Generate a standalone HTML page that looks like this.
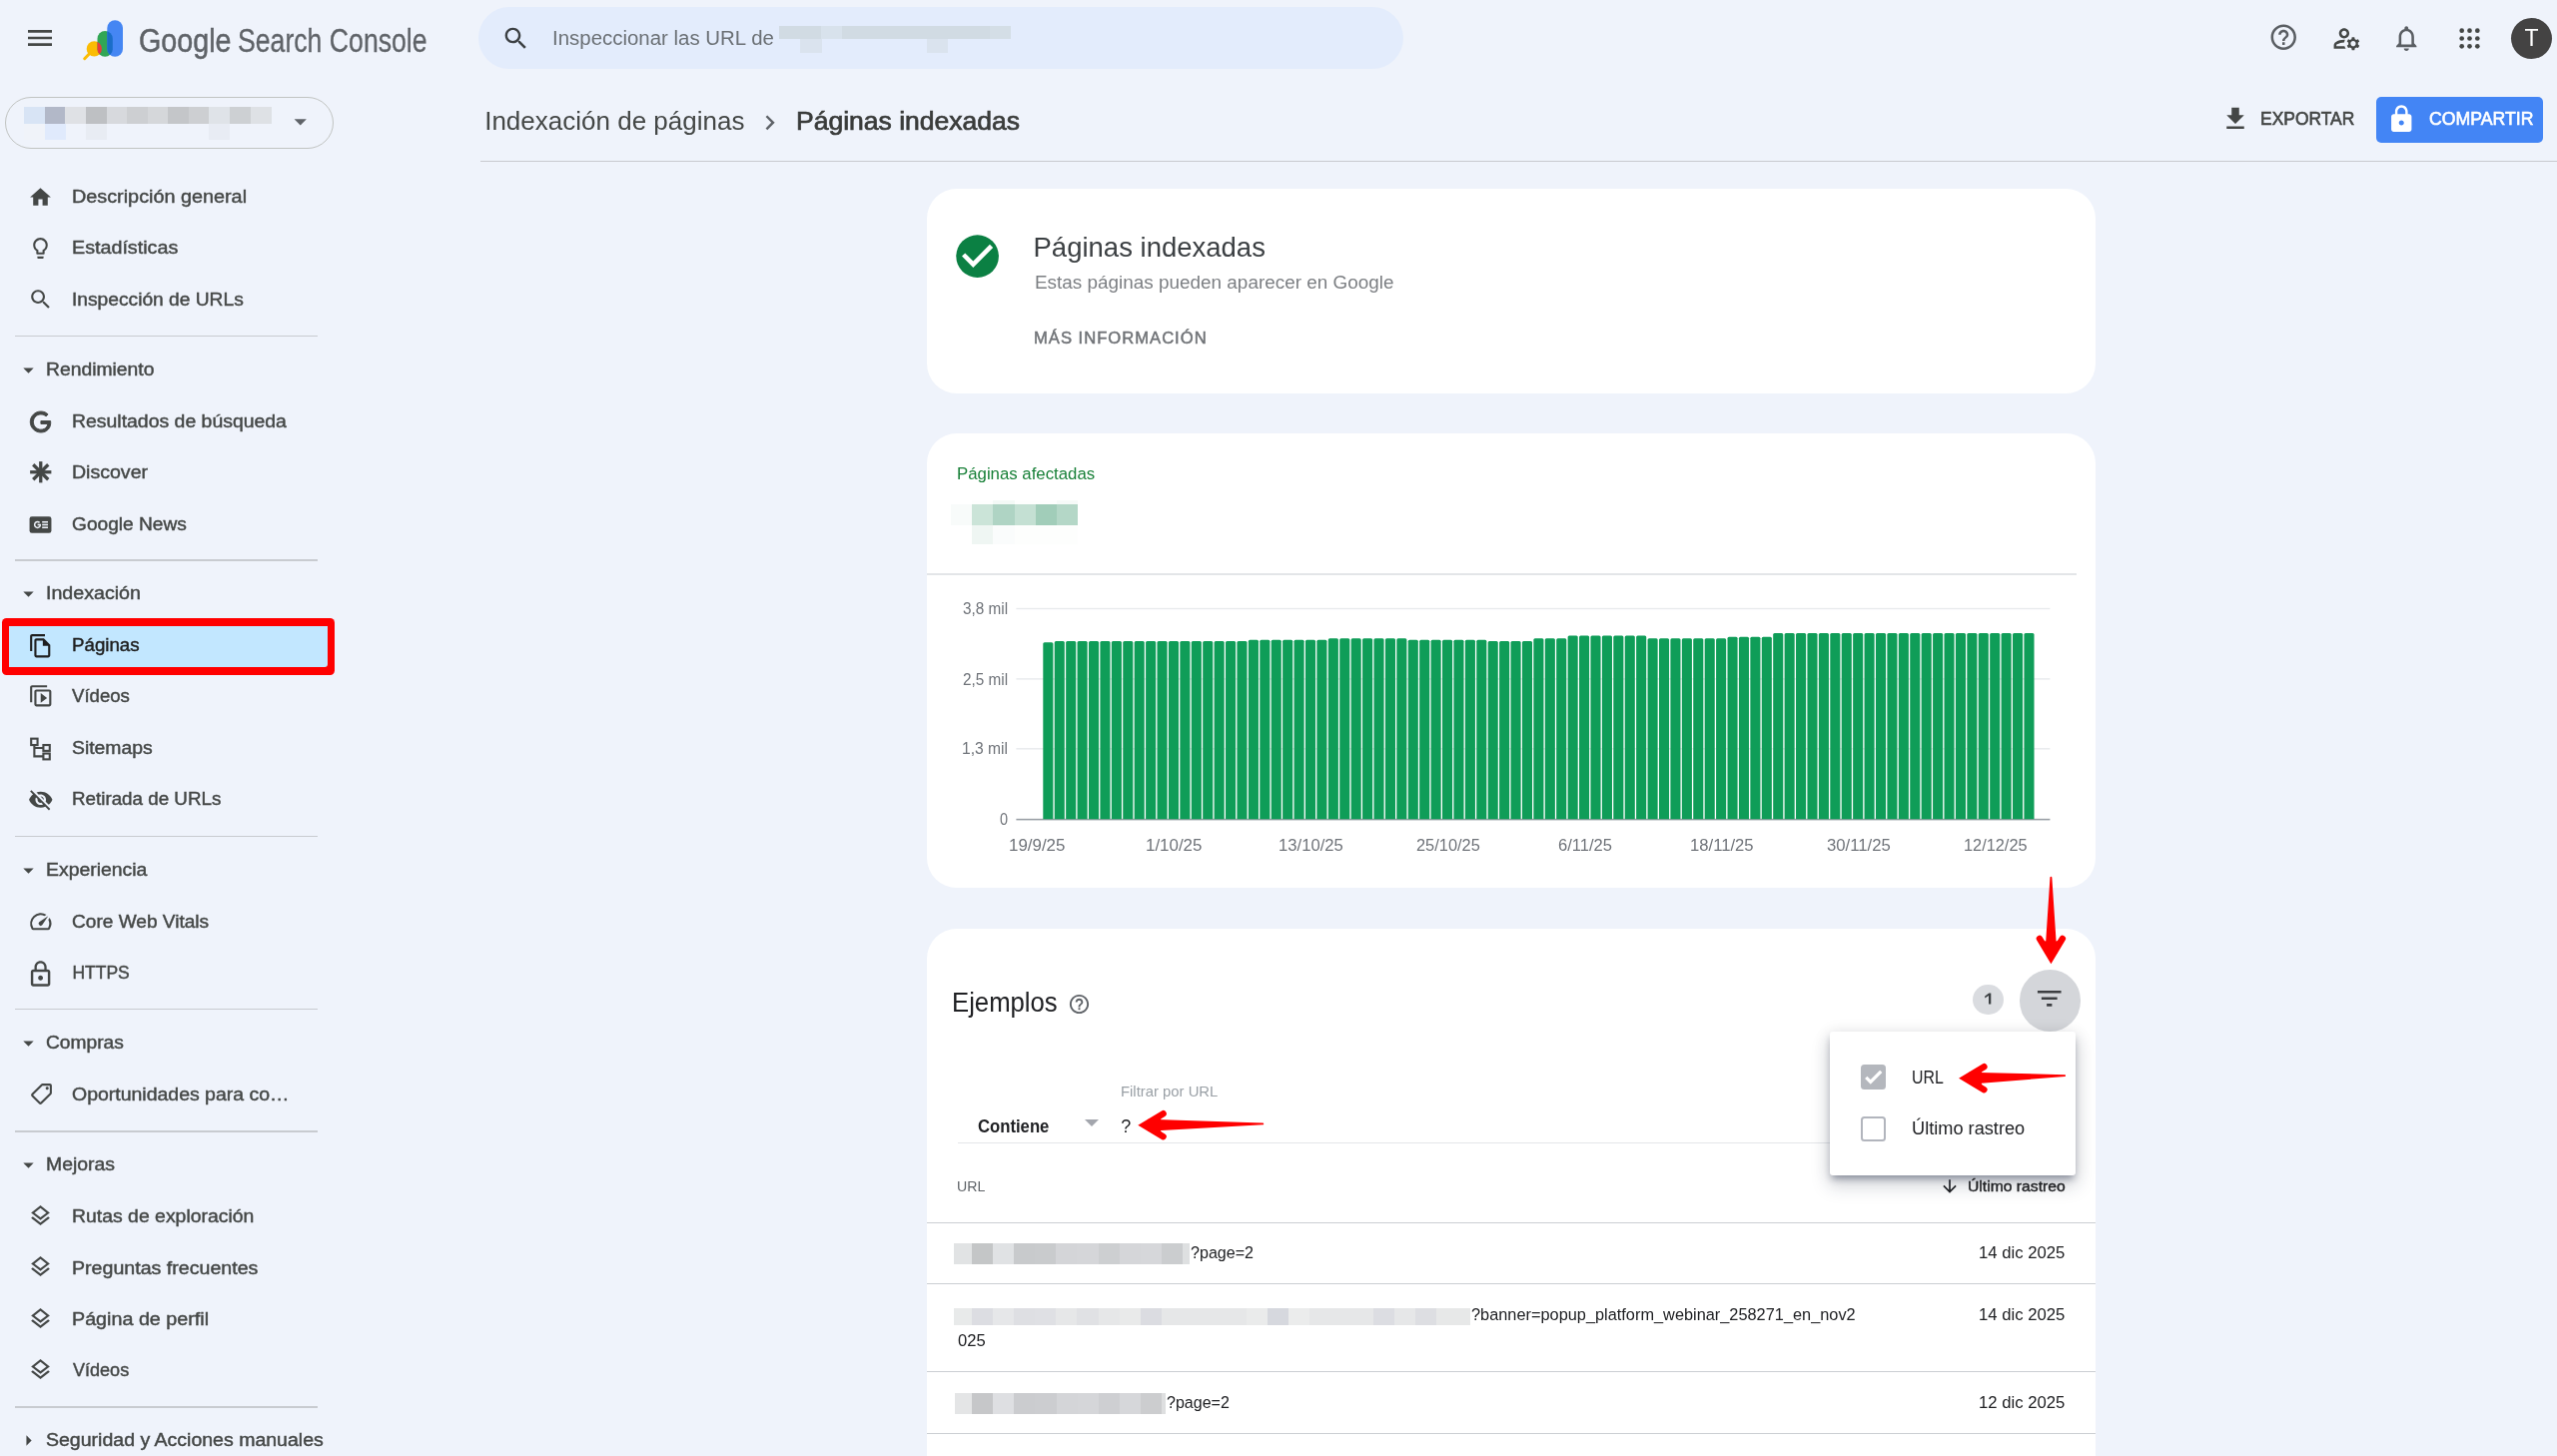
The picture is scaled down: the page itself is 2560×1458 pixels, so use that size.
<!DOCTYPE html><html><head><meta charset="utf-8"><title>Google Search Console</title><style>

html,body{margin:0;padding:0}
html{width:2560px;height:1458px;overflow:hidden}
body{width:2560px;height:1458px;position:relative;overflow:hidden;background:#eff3fb;font-family:"Liberation Sans",sans-serif;}
.t{position:absolute;white-space:nowrap;display:block;transform-origin:0 50%}
.ic{position:absolute;display:block;overflow:visible}
.b{position:absolute;box-sizing:border-box}
i{position:absolute;display:block}
.card{position:absolute;background:#fff;border-radius:30px;left:927.6px;width:1170.6px}
.hr{position:absolute;height:2px;background:#c7cad1}

</style></head><body>
<svg class="ic" style="left:24.00px;top:22.00px;width:32.00px;height:32.00px;" viewBox="0 0 24 24" fill="#444746"><path d="M3 18h18v-2H3v2zm0-5h18v-2H3v2zm0-7v2h18V6H3z"/></svg>
<svg class="ic" style="left:81px;top:18px;width:46px;height:46px" viewBox="0 0 46 46">
<defs><clipPath id="cg"><rect x="16.5" y="13.1" width="15.3" height="25.7" rx="7.65"/></clipPath></defs>
<line x1="3.7" y1="40.7" x2="9" y2="35.3" stroke="#fbbc04" stroke-width="3" stroke-linecap="round"/>
<circle cx="13.3" cy="30.9" r="7.6" fill="#fbbc04"/>
<rect x="16.5" y="13.1" width="15.3" height="25.7" rx="7.65" fill="#31a655"/>
<circle cx="13.3" cy="30.9" r="7.6" fill="#ea3a3e" clip-path="url(#cg)"/>
<rect x="26.3" y="2.2" width="15.7" height="36.6" rx="7.85" fill="#4586f3"/>
<rect x="26.3" y="2.2" width="15.7" height="36.6" rx="7.85" fill="#1a6dc8" clip-path="url(#cg)"/>
</svg>
<div class="b" style="left:4.7px;top:97.4px;width:329.4px;height:51.3px;border:1.6px solid #c1c4c2;border-radius:26px"></div>
<i style="left:24.2px;top:107.3px;width:21.0px;height:16.6px;background:rgb(216,228,245)"></i><i style="left:44.8px;top:107.3px;width:21.0px;height:16.6px;background:rgb(178,184,200)"></i><i style="left:65.3px;top:107.3px;width:21.0px;height:16.6px;background:rgb(223,225,229)"></i><i style="left:85.9px;top:107.3px;width:21.0px;height:16.6px;background:rgb(190,192,195)"></i><i style="left:106.5px;top:107.3px;width:21.0px;height:16.6px;background:rgb(215,217,221)"></i><i style="left:127.0px;top:107.3px;width:21.0px;height:16.6px;background:rgb(205,207,210)"></i><i style="left:147.6px;top:107.3px;width:21.0px;height:16.6px;background:rgb(213,215,218)"></i><i style="left:168.2px;top:107.3px;width:21.0px;height:16.6px;background:rgb(196,198,201)"></i><i style="left:188.8px;top:107.3px;width:21.0px;height:16.6px;background:rgb(205,207,210)"></i><i style="left:209.3px;top:107.3px;width:21.0px;height:16.6px;background:rgb(223,227,232)"></i><i style="left:229.9px;top:107.3px;width:21.0px;height:16.6px;background:rgb(205,208,211)"></i><i style="left:250.5px;top:107.3px;width:21.0px;height:16.6px;background:rgb(222,225,229)"></i>
<i style="left:24.2px;top:123.7px;width:21.0px;height:16.1px;background:rgb(240,243,249)"></i><i style="left:44.8px;top:123.7px;width:21.0px;height:16.1px;background:rgb(224,234,252)"></i><i style="left:85.9px;top:123.7px;width:21.0px;height:16.1px;background:rgb(232,236,243)"></i><i style="left:209.3px;top:123.7px;width:21.0px;height:16.1px;background:rgb(232,236,244)"></i>
<svg class="ic" style="left:286.05px;top:106.65px;width:29.50px;height:29.50px;" viewBox="0 0 24 24" fill="#5f6368"><path d="M7 10l5 5 5-5z"/></svg>
<div class="b" style="left:479.3px;top:7.3px;width:926px;height:62px;border-radius:31px;background:#e3ecfc"></div>
<svg class="ic" style="left:501.50px;top:23.60px;width:29.00px;height:29.00px;" viewBox="0 0 24 24" fill="#3c4043"><path d="M15.5 14h-.79l-.28-.27C15.41 12.59 16 11.11 16 9.5 16 5.91 13.09 3 9.5 3S3 5.91 3 9.5 5.91 16 9.5 16c1.61 0 3.09-.59 4.23-1.57l.27.28v.79l5 4.99L20.49 19l-4.99-5zm-6 0C7.01 14 5 11.99 5 9.5S7.01 5 9.5 5 14 7.01 14 9.5 11.99 14 9.5 14z"/></svg>
<i style="left:780.3px;top:25.9px;width:21.4px;height:13.3px;background:rgb(209,219,227)"></i><i style="left:801.3px;top:25.9px;width:21.4px;height:13.3px;background:rgb(209,219,227)"></i><i style="left:822.4px;top:25.9px;width:21.4px;height:13.3px;background:rgb(216,226,236)"></i><i style="left:843.4px;top:25.9px;width:21.4px;height:13.3px;background:rgb(209,219,227)"></i><i style="left:864.5px;top:25.9px;width:21.4px;height:13.3px;background:rgb(209,219,227)"></i><i style="left:885.5px;top:25.9px;width:21.4px;height:13.3px;background:rgb(209,219,227)"></i><i style="left:906.6px;top:25.9px;width:21.4px;height:13.3px;background:rgb(209,219,227)"></i><i style="left:927.6px;top:25.9px;width:21.4px;height:13.3px;background:rgb(209,219,227)"></i><i style="left:948.7px;top:25.9px;width:21.4px;height:13.3px;background:rgb(209,219,227)"></i><i style="left:969.8px;top:25.9px;width:21.4px;height:13.3px;background:rgb(209,219,227)"></i><i style="left:990.8px;top:25.9px;width:21.4px;height:13.3px;background:rgb(212,222,230)"></i>
<i style="left:801.3px;top:39.0px;width:21.4px;height:13.9px;background:rgb(218,227,238)"></i><i style="left:927.6px;top:39.0px;width:21.4px;height:13.9px;background:rgb(218,227,238)"></i>
<svg class="ic" style="left:2270.95px;top:22.45px;width:30.50px;height:30.50px;" viewBox="0 0 24 24" fill="#5a5e63"><path d="M11 18h2v-2h-2v2zm1-16C6.48 2 2 6.48 2 12s4.48 10 10 10 10-4.48 10-10S17.52 2 12 2zm0 18c-4.41 0-8-3.59-8-8s3.59-8 8-8 8 3.59 8 8-3.59 8-8 8zm0-14c-2.21 0-4 1.79-4 4h2c0-1.1.9-2 2-2s2 .9 2 2c0 2-3 1.75-3 5h2c0-2.25 3-2.5 3-5 0-2.21-1.79-4-4-4z"/></svg>
<svg class="ic" style="left:2333.50px;top:22.80px;width:31.00px;height:31.00px;" viewBox="0 0 24 24" fill="#444746"><path d="M4 18v-.65c0-.34.16-.66.41-.81C6.1 15.53 8.03 15 10 15c.03 0 .05 0 .08.01.1-.7.3-1.37.59-1.98-.22-.02-.44-.03-.67-.03-2.42 0-4.68.67-6.61 1.82-.88.52-1.39 1.5-1.39 2.53V20h9.26c-.42-.6-.75-1.28-.97-2H4zm6-6c2.21 0 4-1.79 4-4s-1.79-4-4-4-4 1.79-4 4 1.79 4 4 4zm0-6c1.1 0 2 .9 2 2s-.9 2-2 2-2-.9-2-2 .9-2 2-2zm10.75 10c0-.22-.03-.42-.06-.63l1.14-1.01-1-1.73-1.45.49c-.32-.27-.68-.48-1.08-.63L18 11h-2l-.3 1.49c-.4.15-.76.36-1.08.63l-1.45-.49-1 1.73 1.14 1.01c-.03.21-.06.41-.06.63s.03.42.06.63l-1.14 1.01 1 1.73 1.45-.49c.32.27.68.48 1.08.63L16 21h2l.3-1.49c.4-.15.76-.36 1.08-.63l1.45.49 1-1.73-1.14-1.01c.03-.21.06-.41.06-.63zM17 18c-1.1 0-2-.9-2-2s.9-2 2-2 2 .9 2 2-.9 2-2 2z"/></svg>
<svg class="ic" style="left:2393.75px;top:22.55px;width:30.50px;height:30.50px;" viewBox="0 0 24 24" fill="#5a5e63"><path d="M12 22c1.1 0 2-.9 2-2h-4c0 1.1.9 2 2 2zm6-6v-5c0-3.07-1.63-5.64-4.5-6.32V4c0-.83-.67-1.5-1.5-1.5s-1.5.67-1.5 1.5v.68C7.64 5.36 6 7.92 6 11v5l-2 2v1h16v-1l-2-2zm-2 1H8v-6c0-2.48 1.51-4.5 4-4.5s4 2.02 4 4.5v6z"/></svg>
<svg class="ic" style="left:2460.20px;top:25.70px;width:25.00px;height:25.00px;" viewBox="0 0 24 24" fill="#444746"><circle cx="4.5" cy="4.5" r="2.25"/><circle cx="4.5" cy="12" r="2.25"/><circle cx="4.5" cy="19.5" r="2.25"/><circle cx="12" cy="4.5" r="2.25"/><circle cx="12" cy="12" r="2.25"/><circle cx="12" cy="19.5" r="2.25"/><circle cx="19.5" cy="4.5" r="2.25"/><circle cx="19.5" cy="12" r="2.25"/><circle cx="19.5" cy="19.5" r="2.25"/></svg>
<div class="b" style="left:2514px;top:17.7px;width:41px;height:41px;border-radius:50%;background:#444343"></div>
<svg class="ic" style="left:755.95px;top:107.85px;width:29.50px;height:29.50px;" viewBox="0 0 24 24" fill="#5f6368"><path d="M10 6L8.59 7.41 13.17 12l-4.58 4.59L10 18l6-6z"/></svg>
<svg class="ic" style="left:2222.80px;top:104.30px;width:30.00px;height:30.00px;" viewBox="0 0 24 24" fill="#444746"><path d="M19 9h-4V3H9v6H5l7 7 7-7zM5 18v2h14v-2H5z"/></svg>
<div class="b" style="left:2378.8px;top:97.3px;width:167.7px;height:45.6px;border-radius:5px;background:#4385f5"></div>
<svg class="ic" style="left:2388.95px;top:104.35px;width:30.50px;height:30.50px;" viewBox="0 0 24 24" fill="#ffffff"><path d="M18 8h-1V6c0-2.76-2.24-5-5-5S7 3.24 7 6v2H6c-1.1 0-2 .9-2 2v10c0 1.1.9 2 2 2h12c1.1 0 2-.9 2-2V10c0-1.1-.9-2-2-2zm-6 9c-1.1 0-2-.9-2-2s.9-2 2-2 2 .9 2 2-.9 2-2 2zm3.1-9H8.9V6c0-1.71 1.39-3.1 3.1-3.1 1.71 0 3.1 1.39 3.1 3.1v2z"/></svg>
<div class="hr" style="left:480.5px;top:160.6px;width:2079.5px;height:1.6px;background:#c8cacf"></div>
<div class="hr" style="left:15px;top:335.7px;width:303px;height:1.6px;background:#c8cbd0"></div>
<div class="hr" style="left:15px;top:560.2px;width:303px;height:1.6px;background:#c8cbd0"></div>
<div class="hr" style="left:15px;top:836.6px;width:303px;height:1.6px;background:#c8cbd0"></div>
<div class="hr" style="left:15px;top:1009.6px;width:303px;height:1.6px;background:#c8cbd0"></div>
<div class="hr" style="left:15px;top:1132.2px;width:303px;height:1.6px;background:#c8cbd0"></div>
<div class="hr" style="left:15px;top:1408.2px;width:303px;height:1.6px;background:#c8cbd0"></div>
<div class="b" style="left:1.6px;top:619.2px;width:333.7px;height:57px;border-radius:4.5px;background:#ff0000"></div>
<div class="b" style="left:9.1px;top:627px;width:318.8px;height:40.7px;background:#c2e7ff;border-radius:0 0 3px 0"></div>
<svg class="ic" style="left:16.20px;top:358.30px;width:25.00px;height:25.00px;" viewBox="0 0 24 24" fill="#444746"><path d="M7 10l5 5 5-5z"/></svg>
<svg class="ic" style="left:16.20px;top:582.30px;width:25.00px;height:25.00px;" viewBox="0 0 24 24" fill="#444746"><path d="M7 10l5 5 5-5z"/></svg>
<svg class="ic" style="left:16.20px;top:859.30px;width:25.00px;height:25.00px;" viewBox="0 0 24 24" fill="#444746"><path d="M7 10l5 5 5-5z"/></svg>
<svg class="ic" style="left:16.20px;top:1032.30px;width:25.00px;height:25.00px;" viewBox="0 0 24 24" fill="#444746"><path d="M7 10l5 5 5-5z"/></svg>
<svg class="ic" style="left:16.20px;top:1154.30px;width:25.00px;height:25.00px;" viewBox="0 0 24 24" fill="#444746"><path d="M7 10l5 5 5-5z"/></svg>
<svg class="ic" style="left:16.20px;top:1430.00px;width:25.00px;height:25.00px;" viewBox="0 0 24 24" fill="#444746"><path d="M10 17l5-5-5-5v10z"/></svg>
<svg class="ic" style="left:28.30px;top:184.70px;width:25.00px;height:25.00px;" viewBox="0 0 24 24" fill="#444746"><path d="M10 20v-6h4v6h5v-8h3L12 3 2 12h3v8z"/></svg>
<svg class="ic" style="left:28.00px;top:236.00px;width:25.00px;height:25.00px;" viewBox="0 0 24 24" fill="#444746"><path d="M9 21c0 .55.45 1 1 1h4c.55 0 1-.45 1-1v-1H9v1zm3-19C8.14 2 5 5.14 5 9c0 2.38 1.19 4.47 3 5.74V17c0 .55.45 1 1 1h6c.55 0 1-.45 1-1v-2.26c1.81-1.27 3-3.36 3-5.74 0-3.86-3.14-7-7-7zm2.85 11.1l-.85.6V16h-4v-2.3l-.85-.6C7.8 12.16 7 10.63 7 9c0-2.76 2.24-5 5-5s5 2.24 5 5c0 1.63-.8 3.16-2.15 4.1z"/></svg>
<svg class="ic" style="left:28.25px;top:286.75px;width:25.50px;height:25.50px;" viewBox="0 0 24 24" fill="#444746"><path d="M15.5 14h-.79l-.28-.27C15.41 12.59 16 11.11 16 9.5 16 5.91 13.09 3 9.5 3S3 5.91 3 9.5 5.91 16 9.5 16c1.61 0 3.09-.59 4.23-1.57l.27.28v.79l5 4.99L20.49 19l-4.99-5zm-6 0C7.01 14 5 11.99 5 9.5S7.01 5 9.5 5 14 7.01 14 9.5 11.99 14 9.5 14z"/></svg>
<svg class="ic" style="left:30.30px;top:411.80px;width:21.00px;height:21.00px;" viewBox="0 0 24 24" fill="#444746"><path d="M12.48 10.92v3.28h7.84c-.24 1.84-.853 3.187-1.787 4.133-1.147 1.147-2.933 2.4-6.053 2.4-4.827 0-8.6-3.893-8.6-8.72s3.773-8.72 8.6-8.72c2.6 0 4.507 1.027 5.907 2.347l2.307-2.307C18.747 1.44 16.133 0 12.48 0 5.867 0 .307 5.387.307 12s5.56 12 12.173 12c3.573 0 6.267-1.173 8.373-3.36 2.16-2.16 2.84-5.213 2.84-7.667 0-.76-.053-1.467-.173-2.053H12.48z" stroke="#444746" stroke-width="1.1"/></svg>
<svg class="ic" style="left:28.05px;top:460.25px;width:25.50px;height:25.50px;" viewBox="0 0 24 24" fill="#444746"><line x1="12" y1="2" x2="12" y2="22" transform="rotate(0 12 12)" stroke="#444746" stroke-width="3.1"/><line x1="12" y1="2" x2="12" y2="22" transform="rotate(45 12 12)" stroke="#444746" stroke-width="3.1"/><line x1="12" y1="2" x2="12" y2="22" transform="rotate(90 12 12)" stroke="#444746" stroke-width="3.1"/><line x1="12" y1="2" x2="12" y2="22" transform="rotate(135 12 12)" stroke="#444746" stroke-width="3.1"/></svg>
<svg class="ic" style="left:28.00px;top:512.50px;width:25.00px;height:25.00px;" viewBox="0 0 24 24" fill="#444746"><rect x="1.5" y="4" width="21" height="16" rx="2.2" fill="#444746"/><path d="M9.2 11.3v1.4h1.9c-.2.9-.9 1.4-1.9 1.4-1.2 0-2.1-.9-2.1-2.1s.9-2.1 2.1-2.1c.55 0 1 .2 1.4.55l1-1C10.95 8.85 10.15 8.5 9.2 8.5c-1.95 0-3.5 1.55-3.5 3.5s1.55 3.5 3.5 3.5c2 0 3.35-1.4 3.35-3.4 0-.3 0-.5-.07-.8z" fill="#eff3fb"/><rect x="13.6" y="8.6" width="5.6" height="1.5" fill="#eff3fb"/><rect x="13.6" y="11.25" width="5.6" height="1.5" fill="#eff3fb"/><rect x="13.6" y="13.9" width="5.6" height="1.5" fill="#eff3fb"/></svg>
<svg class="ic" style="left:28.25px;top:633.55px;width:25.50px;height:25.50px;" viewBox="0 0 24 24" fill="#1f1f1f"><path d="M16 1H4c-1.1 0-2 .9-2 2v14h2V3h12V1zm-1 4H8c-1.1 0-1.99.9-1.99 2L6 21c0 1.1.89 2 1.99 2H19c1.1 0 2-.9 2-2V11l-6-6zM8 21V7h6v5h5v9H8z"/></svg>
<svg class="ic" style="left:27.75px;top:684.45px;width:25.50px;height:25.50px;transform:scaleY(-1);" viewBox="0 0 24 24" fill="#444746"><path d="M4 6H2v14c0 1.1.9 2 2 2h14v-2H4V6zm16-4H8c-1.1 0-2 .9-2 2v12c0 1.1.9 2 2 2h12c1.1 0 2-.9 2-2V4c0-1.1-.9-2-2-2zm0 14H8V4h12v12zM12 5.5v9l6-4.5z"/></svg>
<svg class="ic" style="left:27.75px;top:736.75px;width:25.50px;height:25.50px;" viewBox="0 0 24 24" fill="#444746"><g fill="none" stroke="#444746" stroke-width="2"><rect x="3" y="2.5" width="6" height="6"/><rect x="14.5" y="8.5" width="6" height="5.5"/><rect x="14.5" y="16.5" width="6" height="5.5"/><path d="M6 8.5V19.2H14.5M6 11.3H14.5"/></g></svg>
<svg class="ic" style="left:27.75px;top:787.75px;width:25.50px;height:25.50px;" viewBox="0 0 24 24" fill="#444746"><path d="M12 7c2.76 0 5 2.24 5 5 0 .65-.13 1.26-.36 1.83l2.92 2.92c1.51-1.26 2.7-2.89 3.43-4.75-1.73-4.39-6-7.5-11-7.5-1.4 0-2.74.25-3.98.7l2.16 2.16C10.74 7.13 11.35 7 12 7zM2 4.27l2.28 2.28.46.46C3.08 8.3 1.78 10.02 1 12c1.73 4.39 6 7.5 11 7.5 1.55 0 3.03-.3 4.38-.84l.42.42L19.73 22 21 20.73 3.27 3 2 4.27zM7.53 9.8l1.55 1.55c-.05.21-.08.43-.08.65 0 1.66 1.34 3 3 3 .22 0 .44-.03.65-.08l1.55 1.55c-.67.33-1.41.53-2.2.53-2.76 0-5-2.24-5-5 0-.79.2-1.53.53-2.2zm4.31-.78l3.15 3.15.02-.16c0-1.66-1.34-3-3-3l-.17.01z"/></svg>
<svg class="ic" style="left:27.95px;top:909.95px;width:25.50px;height:25.50px;" viewBox="0 0 24 24" fill="#444746"><path d="M20.38 8.57l-1.23 1.85a8 8 0 0 1-.22 7.58H5.07A8 8 0 0 1 15.58 6.85l1.85-1.23A10 10 0 0 0 3.35 19a2 2 0 0 0 1.72 1h13.85a2 2 0 0 0 1.74-1 10 10 0 0 0-.27-10.44zm-9.79 6.84a2 2 0 0 0 2.83 0l5.66-8.49-8.49 5.66a2 2 0 0 0 0 2.83z"/></svg>
<svg class="ic" style="left:26.30px;top:960.50px;width:29.20px;height:29.20px;" viewBox="0 0 24 24" fill="#444746"><path d="M12 17c1.1 0 2-.9 2-2s-.9-2-2-2-2 .9-2 2 .9 2 2 2zm6-9h-1V6c0-2.76-2.24-5-5-5S7 3.24 7 6v2H6c-1.1 0-2 .9-2 2v10c0 1.1.9 2 2 2h12c1.1 0 2-.9 2-2V10c0-1.1-.9-2-2-2zM8.9 6c0-1.71 1.39-3.1 3.1-3.1s3.1 1.39 3.1 3.1v2H8.9V6zM18 20H6V10h12v10z"/></svg>
<svg class="ic" style="left:29.00px;top:1083.00px;width:25.00px;height:25.00px;transform:scaleX(-1);" viewBox="0 0 24 24" fill="#444746"><path d="M21.41 11.58l-9-9C12.05 2.22 11.55 2 11 2H4c-1.1 0-2 .9-2 2v7c0 .55.22 1.05.59 1.42l9 9c.36.36.86.58 1.41.58s1.05-.22 1.41-.59l7-7c.37-.36.59-.86.59-1.41s-.23-1.06-.59-1.42zM13 20.01L4 11V4h7v-.01l9 9-7 7.02zM6.5 5C5.67 5 5 5.67 5 6.5S5.67 8 6.5 8 8 7.33 8 6.5 7.33 5 6.5 5z"/></svg>
<svg class="ic" style="left:28.00px;top:1204.50px;width:25.00px;height:25.00px;" viewBox="0 0 24 24" fill="#444746"><path d="M11.99 18.54l-7.37-5.73L3 14.07l9 7 9-7-1.63-1.27-7.38 5.74zM12 16l7.36-5.73L21 9l-9-7-9 7 1.63 1.27L12 16zm0-11.47L17.74 9 12 13.47 6.26 9 12 4.53z"/></svg>
<svg class="ic" style="left:28.00px;top:1256.00px;width:25.00px;height:25.00px;" viewBox="0 0 24 24" fill="#444746"><path d="M11.99 18.54l-7.37-5.73L3 14.07l9 7 9-7-1.63-1.27-7.38 5.74zM12 16l7.36-5.73L21 9l-9-7-9 7 1.63 1.27L12 16zm0-11.47L17.74 9 12 13.47 6.26 9 12 4.53z"/></svg>
<svg class="ic" style="left:28.00px;top:1307.50px;width:25.00px;height:25.00px;" viewBox="0 0 24 24" fill="#444746"><path d="M11.99 18.54l-7.37-5.73L3 14.07l9 7 9-7-1.63-1.27-7.38 5.74zM12 16l7.36-5.73L21 9l-9-7-9 7 1.63 1.27L12 16zm0-11.47L17.74 9 12 13.47 6.26 9 12 4.53z"/></svg>
<svg class="ic" style="left:28.00px;top:1359.00px;width:25.00px;height:25.00px;" viewBox="0 0 24 24" fill="#444746"><path d="M11.99 18.54l-7.37-5.73L3 14.07l9 7 9-7-1.63-1.27-7.38 5.74zM12 16l7.36-5.73L21 9l-9-7-9 7 1.63 1.27L12 16zm0-11.47L17.74 9 12 13.47 6.26 9 12 4.53z"/></svg>
<div class="card" style="top:189px;height:204.6px"></div>
<svg class="ic" style="left:953.20px;top:230.50px;width:51.20px;height:51.20px;" viewBox="0 0 24 24" fill="#0b8043"><circle cx="12" cy="12" r="10" fill="#0b8043"/><path d="M10 17.3l-5.3-5.3 1.5-1.5L10 14.3l7.8-7.8 1.5 1.5-9.3 9.3z" fill="#fff"/></svg>
<div class="card" style="top:434px;height:454.5px"></div>
<i style="left:973.2px;top:500.6px;width:21.6px;height:4.8px;background:rgb(253,254,253)"></i><i style="left:994.3px;top:500.6px;width:21.6px;height:4.8px;background:rgb(243,249,246)"></i><i style="left:1015.5px;top:500.6px;width:21.6px;height:4.8px;background:rgb(253,254,253)"></i><i style="left:1036.6px;top:500.6px;width:21.6px;height:4.8px;background:rgb(253,254,253)"></i><i style="left:1057.8px;top:500.6px;width:21.6px;height:4.8px;background:rgb(246,250,248)"></i>
<i style="left:952.0px;top:505.0px;width:21.6px;height:20.8px;background:rgb(248,251,250)"></i><i style="left:973.2px;top:505.0px;width:21.6px;height:20.8px;background:rgb(203,228,216)"></i><i style="left:994.3px;top:505.0px;width:21.6px;height:20.8px;background:rgb(175,212,196)"></i><i style="left:1015.5px;top:505.0px;width:21.6px;height:20.8px;background:rgb(196,224,211)"></i><i style="left:1036.6px;top:505.0px;width:21.6px;height:20.8px;background:rgb(161,205,185)"></i><i style="left:1057.8px;top:505.0px;width:21.6px;height:20.8px;background:rgb(180,215,199)"></i>
<i style="left:973.2px;top:525.5px;width:21.6px;height:19.2px;background:rgb(239,246,243)"></i><i style="left:994.3px;top:525.5px;width:21.6px;height:19.2px;background:rgb(250,252,252)"></i><i style="left:1015.5px;top:525.5px;width:21.6px;height:19.2px;background:rgb(253,254,253)"></i><i style="left:1036.6px;top:525.5px;width:21.6px;height:19.2px;background:rgb(253,254,253)"></i><i style="left:1057.8px;top:525.5px;width:21.6px;height:19.2px;background:rgb(253,254,253)"></i>
<div class="hr" style="left:927.5px;top:573.7px;width:1151px;background:#e3e5e8"></div>
<svg class="ic" style="left:0;top:0;width:2560px;height:1458px" viewBox="0 0 2560 1458"><rect x="1017.4" y="608.8" width="1035" height="1.4" fill="#e8eaed"/><rect x="1017.4" y="679.2" width="1035" height="1.4" fill="#e8eaed"/><rect x="1017.4" y="749.1" width="1035" height="1.4" fill="#e8eaed"/><rect x="1017.4" y="819.8" width="1035" height="1.6" fill="#9aa0a6"/><path d="M1044.30 820.2V644.8q0-1.5 1.5-1.5h7.1q1.5 0 1.5 1.5V820.2z" fill="#0f9d58"/><path d="M1055.72 820.2V643.4q0-1.5 1.5-1.5h7.1q1.5 0 1.5 1.5V820.2z" fill="#0f9d58"/><path d="M1067.14 820.2V643.4q0-1.5 1.5-1.5h7.1q1.5 0 1.5 1.5V820.2z" fill="#0f9d58"/><path d="M1078.56 820.2V643.4q0-1.5 1.5-1.5h7.1q1.5 0 1.5 1.5V820.2z" fill="#0f9d58"/><path d="M1089.98 820.2V643.4q0-1.5 1.5-1.5h7.1q1.5 0 1.5 1.5V820.2z" fill="#0f9d58"/><path d="M1101.40 820.2V643.4q0-1.5 1.5-1.5h7.1q1.5 0 1.5 1.5V820.2z" fill="#0f9d58"/><path d="M1112.82 820.2V643.4q0-1.5 1.5-1.5h7.1q1.5 0 1.5 1.5V820.2z" fill="#0f9d58"/><path d="M1124.24 820.2V643.4q0-1.5 1.5-1.5h7.1q1.5 0 1.5 1.5V820.2z" fill="#0f9d58"/><path d="M1135.66 820.2V643.4q0-1.5 1.5-1.5h7.1q1.5 0 1.5 1.5V820.2z" fill="#0f9d58"/><path d="M1147.08 820.2V643.4q0-1.5 1.5-1.5h7.1q1.5 0 1.5 1.5V820.2z" fill="#0f9d58"/><path d="M1158.50 820.2V643.4q0-1.5 1.5-1.5h7.1q1.5 0 1.5 1.5V820.2z" fill="#0f9d58"/><path d="M1169.92 820.2V643.4q0-1.5 1.5-1.5h7.1q1.5 0 1.5 1.5V820.2z" fill="#0f9d58"/><path d="M1181.34 820.2V643.4q0-1.5 1.5-1.5h7.1q1.5 0 1.5 1.5V820.2z" fill="#0f9d58"/><path d="M1192.76 820.2V643.4q0-1.5 1.5-1.5h7.1q1.5 0 1.5 1.5V820.2z" fill="#0f9d58"/><path d="M1204.18 820.2V643.4q0-1.5 1.5-1.5h7.1q1.5 0 1.5 1.5V820.2z" fill="#0f9d58"/><path d="M1215.60 820.2V643.4q0-1.5 1.5-1.5h7.1q1.5 0 1.5 1.5V820.2z" fill="#0f9d58"/><path d="M1227.02 820.2V643.4q0-1.5 1.5-1.5h7.1q1.5 0 1.5 1.5V820.2z" fill="#0f9d58"/><path d="M1238.44 820.2V643.4q0-1.5 1.5-1.5h7.1q1.5 0 1.5 1.5V820.2z" fill="#0f9d58"/><path d="M1249.86 820.2V642.2q0-1.5 1.5-1.5h7.1q1.5 0 1.5 1.5V820.2z" fill="#0f9d58"/><path d="M1261.28 820.2V642.2q0-1.5 1.5-1.5h7.1q1.5 0 1.5 1.5V820.2z" fill="#0f9d58"/><path d="M1272.70 820.2V642.2q0-1.5 1.5-1.5h7.1q1.5 0 1.5 1.5V820.2z" fill="#0f9d58"/><path d="M1284.12 820.2V642.2q0-1.5 1.5-1.5h7.1q1.5 0 1.5 1.5V820.2z" fill="#0f9d58"/><path d="M1295.54 820.2V642.2q0-1.5 1.5-1.5h7.1q1.5 0 1.5 1.5V820.2z" fill="#0f9d58"/><path d="M1306.96 820.2V642.2q0-1.5 1.5-1.5h7.1q1.5 0 1.5 1.5V820.2z" fill="#0f9d58"/><path d="M1318.38 820.2V642.2q0-1.5 1.5-1.5h7.1q1.5 0 1.5 1.5V820.2z" fill="#0f9d58"/><path d="M1329.80 820.2V640.8q0-1.5 1.5-1.5h7.1q1.5 0 1.5 1.5V820.2z" fill="#0f9d58"/><path d="M1341.22 820.2V640.8q0-1.5 1.5-1.5h7.1q1.5 0 1.5 1.5V820.2z" fill="#0f9d58"/><path d="M1352.64 820.2V640.8q0-1.5 1.5-1.5h7.1q1.5 0 1.5 1.5V820.2z" fill="#0f9d58"/><path d="M1364.06 820.2V640.8q0-1.5 1.5-1.5h7.1q1.5 0 1.5 1.5V820.2z" fill="#0f9d58"/><path d="M1375.48 820.2V640.8q0-1.5 1.5-1.5h7.1q1.5 0 1.5 1.5V820.2z" fill="#0f9d58"/><path d="M1386.90 820.2V640.8q0-1.5 1.5-1.5h7.1q1.5 0 1.5 1.5V820.2z" fill="#0f9d58"/><path d="M1398.32 820.2V640.8q0-1.5 1.5-1.5h7.1q1.5 0 1.5 1.5V820.2z" fill="#0f9d58"/><path d="M1409.74 820.2V642.2q0-1.5 1.5-1.5h7.1q1.5 0 1.5 1.5V820.2z" fill="#0f9d58"/><path d="M1421.16 820.2V642.2q0-1.5 1.5-1.5h7.1q1.5 0 1.5 1.5V820.2z" fill="#0f9d58"/><path d="M1432.58 820.2V642.2q0-1.5 1.5-1.5h7.1q1.5 0 1.5 1.5V820.2z" fill="#0f9d58"/><path d="M1444.00 820.2V642.2q0-1.5 1.5-1.5h7.1q1.5 0 1.5 1.5V820.2z" fill="#0f9d58"/><path d="M1455.42 820.2V642.2q0-1.5 1.5-1.5h7.1q1.5 0 1.5 1.5V820.2z" fill="#0f9d58"/><path d="M1466.84 820.2V642.2q0-1.5 1.5-1.5h7.1q1.5 0 1.5 1.5V820.2z" fill="#0f9d58"/><path d="M1478.26 820.2V642.2q0-1.5 1.5-1.5h7.1q1.5 0 1.5 1.5V820.2z" fill="#0f9d58"/><path d="M1489.68 820.2V643.4q0-1.5 1.5-1.5h7.1q1.5 0 1.5 1.5V820.2z" fill="#0f9d58"/><path d="M1501.10 820.2V643.4q0-1.5 1.5-1.5h7.1q1.5 0 1.5 1.5V820.2z" fill="#0f9d58"/><path d="M1512.52 820.2V643.4q0-1.5 1.5-1.5h7.1q1.5 0 1.5 1.5V820.2z" fill="#0f9d58"/><path d="M1523.94 820.2V643.4q0-1.5 1.5-1.5h7.1q1.5 0 1.5 1.5V820.2z" fill="#0f9d58"/><path d="M1535.36 820.2V640.8q0-1.5 1.5-1.5h7.1q1.5 0 1.5 1.5V820.2z" fill="#0f9d58"/><path d="M1546.78 820.2V640.8q0-1.5 1.5-1.5h7.1q1.5 0 1.5 1.5V820.2z" fill="#0f9d58"/><path d="M1558.20 820.2V640.8q0-1.5 1.5-1.5h7.1q1.5 0 1.5 1.5V820.2z" fill="#0f9d58"/><path d="M1569.62 820.2V638.1q0-1.5 1.5-1.5h7.1q1.5 0 1.5 1.5V820.2z" fill="#0f9d58"/><path d="M1581.04 820.2V638.1q0-1.5 1.5-1.5h7.1q1.5 0 1.5 1.5V820.2z" fill="#0f9d58"/><path d="M1592.46 820.2V638.1q0-1.5 1.5-1.5h7.1q1.5 0 1.5 1.5V820.2z" fill="#0f9d58"/><path d="M1603.88 820.2V638.1q0-1.5 1.5-1.5h7.1q1.5 0 1.5 1.5V820.2z" fill="#0f9d58"/><path d="M1615.30 820.2V638.1q0-1.5 1.5-1.5h7.1q1.5 0 1.5 1.5V820.2z" fill="#0f9d58"/><path d="M1626.72 820.2V638.1q0-1.5 1.5-1.5h7.1q1.5 0 1.5 1.5V820.2z" fill="#0f9d58"/><path d="M1638.14 820.2V638.1q0-1.5 1.5-1.5h7.1q1.5 0 1.5 1.5V820.2z" fill="#0f9d58"/><path d="M1649.56 820.2V640.8q0-1.5 1.5-1.5h7.1q1.5 0 1.5 1.5V820.2z" fill="#0f9d58"/><path d="M1660.98 820.2V640.8q0-1.5 1.5-1.5h7.1q1.5 0 1.5 1.5V820.2z" fill="#0f9d58"/><path d="M1672.40 820.2V640.8q0-1.5 1.5-1.5h7.1q1.5 0 1.5 1.5V820.2z" fill="#0f9d58"/><path d="M1683.82 820.2V640.8q0-1.5 1.5-1.5h7.1q1.5 0 1.5 1.5V820.2z" fill="#0f9d58"/><path d="M1695.24 820.2V640.8q0-1.5 1.5-1.5h7.1q1.5 0 1.5 1.5V820.2z" fill="#0f9d58"/><path d="M1706.66 820.2V640.8q0-1.5 1.5-1.5h7.1q1.5 0 1.5 1.5V820.2z" fill="#0f9d58"/><path d="M1718.08 820.2V640.8q0-1.5 1.5-1.5h7.1q1.5 0 1.5 1.5V820.2z" fill="#0f9d58"/><path d="M1729.50 820.2V639.3q0-1.5 1.5-1.5h7.1q1.5 0 1.5 1.5V820.2z" fill="#0f9d58"/><path d="M1740.92 820.2V639.3q0-1.5 1.5-1.5h7.1q1.5 0 1.5 1.5V820.2z" fill="#0f9d58"/><path d="M1752.34 820.2V639.3q0-1.5 1.5-1.5h7.1q1.5 0 1.5 1.5V820.2z" fill="#0f9d58"/><path d="M1763.76 820.2V639.3q0-1.5 1.5-1.5h7.1q1.5 0 1.5 1.5V820.2z" fill="#0f9d58"/><path d="M1775.18 820.2V635.5q0-1.5 1.5-1.5h7.1q1.5 0 1.5 1.5V820.2z" fill="#0f9d58"/><path d="M1786.60 820.2V635.5q0-1.5 1.5-1.5h7.1q1.5 0 1.5 1.5V820.2z" fill="#0f9d58"/><path d="M1798.02 820.2V635.5q0-1.5 1.5-1.5h7.1q1.5 0 1.5 1.5V820.2z" fill="#0f9d58"/><path d="M1809.44 820.2V635.5q0-1.5 1.5-1.5h7.1q1.5 0 1.5 1.5V820.2z" fill="#0f9d58"/><path d="M1820.86 820.2V635.5q0-1.5 1.5-1.5h7.1q1.5 0 1.5 1.5V820.2z" fill="#0f9d58"/><path d="M1832.28 820.2V635.5q0-1.5 1.5-1.5h7.1q1.5 0 1.5 1.5V820.2z" fill="#0f9d58"/><path d="M1843.70 820.2V635.5q0-1.5 1.5-1.5h7.1q1.5 0 1.5 1.5V820.2z" fill="#0f9d58"/><path d="M1855.12 820.2V635.5q0-1.5 1.5-1.5h7.1q1.5 0 1.5 1.5V820.2z" fill="#0f9d58"/><path d="M1866.54 820.2V635.5q0-1.5 1.5-1.5h7.1q1.5 0 1.5 1.5V820.2z" fill="#0f9d58"/><path d="M1877.96 820.2V635.5q0-1.5 1.5-1.5h7.1q1.5 0 1.5 1.5V820.2z" fill="#0f9d58"/><path d="M1889.38 820.2V635.5q0-1.5 1.5-1.5h7.1q1.5 0 1.5 1.5V820.2z" fill="#0f9d58"/><path d="M1900.80 820.2V635.5q0-1.5 1.5-1.5h7.1q1.5 0 1.5 1.5V820.2z" fill="#0f9d58"/><path d="M1912.22 820.2V635.5q0-1.5 1.5-1.5h7.1q1.5 0 1.5 1.5V820.2z" fill="#0f9d58"/><path d="M1923.64 820.2V635.5q0-1.5 1.5-1.5h7.1q1.5 0 1.5 1.5V820.2z" fill="#0f9d58"/><path d="M1935.06 820.2V635.5q0-1.5 1.5-1.5h7.1q1.5 0 1.5 1.5V820.2z" fill="#0f9d58"/><path d="M1946.48 820.2V635.5q0-1.5 1.5-1.5h7.1q1.5 0 1.5 1.5V820.2z" fill="#0f9d58"/><path d="M1957.90 820.2V635.5q0-1.5 1.5-1.5h7.1q1.5 0 1.5 1.5V820.2z" fill="#0f9d58"/><path d="M1969.32 820.2V635.5q0-1.5 1.5-1.5h7.1q1.5 0 1.5 1.5V820.2z" fill="#0f9d58"/><path d="M1980.74 820.2V635.5q0-1.5 1.5-1.5h7.1q1.5 0 1.5 1.5V820.2z" fill="#0f9d58"/><path d="M1992.16 820.2V635.5q0-1.5 1.5-1.5h7.1q1.5 0 1.5 1.5V820.2z" fill="#0f9d58"/><path d="M2003.58 820.2V635.5q0-1.5 1.5-1.5h7.1q1.5 0 1.5 1.5V820.2z" fill="#0f9d58"/><path d="M2015.00 820.2V635.5q0-1.5 1.5-1.5h7.1q1.5 0 1.5 1.5V820.2z" fill="#0f9d58"/><path d="M2026.42 820.2V635.5q0-1.5 1.5-1.5h7.1q1.5 0 1.5 1.5V820.2z" fill="#0f9d58"/></svg>
<div class="card" style="top:930px;height:528px;border-radius:30px 30px 0 0"></div>
<svg class="ic" style="left:1068.80px;top:994.00px;width:23.00px;height:23.00px;" viewBox="0 0 24 24" fill="#5f6368"><path d="M11 18h2v-2h-2v2zm1-16C6.48 2 2 6.48 2 12s4.48 10 10 10 10-4.48 10-10S17.52 2 12 2zm0 18c-4.41 0-8-3.59-8-8s3.59-8 8-8 8 3.59 8 8-3.59 8-8 8zm0-14c-2.21 0-4 1.79-4 4h2c0-1.1.9-2 2-2s2 .9 2 2c0 2-3 1.75-3 5h2c0-2.25 3-2.5 3-5 0-2.21-1.79-4-4-4z"/></svg>
<div class="b" style="left:1975.3px;top:985.5px;width:30.8px;height:30.8px;border-radius:50%;background:#dadce0"></div>
<div class="b" style="left:2021.6px;top:971.1px;width:61.6px;height:61.6px;border-radius:50%;background:#d4d6da"></div>
<svg class="ic" style="left:2036.45px;top:983.85px;width:31.50px;height:31.50px;" viewBox="0 0 24 24" fill="#3c3e41"><path d="M10 18h4v-2h-4v2zM3 6v2h18V6H3zm3 7h12v-2H6v2z"/></svg>
<svg class="ic" style="left:0;top:0;width:2560px;height:1458px" viewBox="0 0 2560 1458"><path d="M1987.2 997.6 L1991.2 994.4 L1993.3 994.4 L1993.3 1005.5 L1991.0 1005.5 L1991.0 997.0 L1987.2 999.6 Z" fill="#3c4043"/></svg>
<div class="b" style="left:1085.7px;top:1121px;width:0;height:0;border-left:7.3px solid transparent;border-right:7.3px solid transparent;border-top:7.8px solid #a3a6ad"></div>
<div class="hr" style="left:959px;top:1143.8px;width:1108px;height:1.2px;background:#e4e6e9"></div>
<svg class="ic" style="left:1942.10px;top:1177.80px;width:20.00px;height:20.00px;" viewBox="0 0 24 24" fill="#202124"><path d="M20 12l-1.41-1.41L13 16.17V4h-2v12.17l-5.58-5.59L4 12l8 8 8-8z"/></svg>
<div class="hr" style="left:927.6px;top:1224px;width:1170.6px;height:1.35px;background:#cbced3"></div>
<div class="hr" style="left:927.6px;top:1285px;width:1170.6px;height:1.35px;background:#cbced3"></div>
<div class="hr" style="left:927.6px;top:1373px;width:1170.6px;height:1.35px;background:#cbced3"></div>
<div class="hr" style="left:927.6px;top:1435px;width:1170.6px;height:1.35px;background:#cbced3"></div>
<i style="left:955.3px;top:1244.9px;width:17.9px;height:20.8px;background:rgb(225,227,228)"></i><i style="left:972.9px;top:1244.9px;width:21.6px;height:20.8px;background:rgb(196,198,199)"></i><i style="left:994.1px;top:1244.9px;width:21.2px;height:20.8px;background:rgb(224,226,228)"></i><i style="left:1014.9px;top:1244.9px;width:21.9px;height:20.8px;background:rgb(200,202,204)"></i><i style="left:1036.4px;top:1244.9px;width:21.2px;height:20.8px;background:rgb(201,203,205)"></i><i style="left:1057.2px;top:1244.9px;width:21.6px;height:20.8px;background:rgb(212,213,216)"></i><i style="left:1078.4px;top:1244.9px;width:21.9px;height:20.8px;background:rgb(213,214,217)"></i><i style="left:1099.9px;top:1244.9px;width:21.4px;height:20.8px;background:rgb(205,207,209)"></i><i style="left:1120.9px;top:1244.9px;width:21.4px;height:20.8px;background:rgb(213,214,217)"></i><i style="left:1141.9px;top:1244.9px;width:21.9px;height:20.8px;background:rgb(214,215,218)"></i><i style="left:1163.4px;top:1244.9px;width:21.2px;height:20.8px;background:rgb(203,205,207)"></i><i style="left:1184.2px;top:1244.9px;width:6.5px;height:20.8px;background:rgb(222,224,225)"></i>
<i style="left:954.9px;top:1310.1px;width:18.4px;height:16.9px;background:rgb(232,234,234)"></i><i style="left:972.9px;top:1310.1px;width:21.6px;height:16.9px;background:rgb(220,221,226)"></i><i style="left:994.1px;top:1310.1px;width:21.2px;height:16.9px;background:rgb(230,231,233)"></i><i style="left:1014.9px;top:1310.1px;width:21.9px;height:16.9px;background:rgb(222,223,227)"></i><i style="left:1036.4px;top:1310.1px;width:21.2px;height:16.9px;background:rgb(223,224,228)"></i><i style="left:1057.2px;top:1310.1px;width:21.6px;height:16.9px;background:rgb(230,231,232)"></i><i style="left:1078.4px;top:1310.1px;width:21.9px;height:16.9px;background:rgb(224,225,228)"></i><i style="left:1099.9px;top:1310.1px;width:21.4px;height:16.9px;background:rgb(230,231,232)"></i><i style="left:1120.9px;top:1310.1px;width:21.4px;height:16.9px;background:rgb(233,234,234)"></i><i style="left:1141.9px;top:1310.1px;width:21.4px;height:16.9px;background:rgb(219,220,225)"></i><i style="left:1163.0px;top:1310.1px;width:85.2px;height:16.9px;background:rgb(230,231,232)"></i><i style="left:1247.7px;top:1310.1px;width:21.2px;height:16.9px;background:rgb(234,235,235)"></i><i style="left:1268.5px;top:1310.1px;width:21.6px;height:16.9px;background:rgb(214,216,222)"></i><i style="left:1289.8px;top:1310.1px;width:21.9px;height:16.9px;background:rgb(235,236,236)"></i><i style="left:1311.2px;top:1310.1px;width:63.9px;height:16.9px;background:rgb(230,231,232)"></i><i style="left:1374.7px;top:1310.1px;width:21.2px;height:16.9px;background:rgb(220,221,226)"></i><i style="left:1395.5px;top:1310.1px;width:21.9px;height:16.9px;background:rgb(230,231,232)"></i><i style="left:1417.0px;top:1310.1px;width:21.6px;height:16.9px;background:rgb(221,222,226)"></i><i style="left:1438.2px;top:1310.1px;width:34.3px;height:16.9px;background:rgb(231,232,232)"></i>
<i style="left:955.6px;top:1394.5px;width:17.6px;height:21.1px;background:rgb(228,229,230)"></i><i style="left:972.9px;top:1394.5px;width:21.5px;height:21.1px;background:rgb(198,199,201)"></i><i style="left:994.0px;top:1394.5px;width:21.5px;height:21.1px;background:rgb(222,223,226)"></i><i style="left:1015.1px;top:1394.5px;width:21.7px;height:21.1px;background:rgb(203,204,207)"></i><i style="left:1036.4px;top:1394.5px;width:21.5px;height:21.1px;background:rgb(204,205,208)"></i><i style="left:1057.5px;top:1394.5px;width:21.7px;height:21.1px;background:rgb(212,213,216)"></i><i style="left:1078.8px;top:1394.5px;width:21.5px;height:21.1px;background:rgb(213,214,217)"></i><i style="left:1099.9px;top:1394.5px;width:21.3px;height:21.1px;background:rgb(206,207,210)"></i><i style="left:1120.8px;top:1394.5px;width:21.5px;height:21.1px;background:rgb(214,215,218)"></i><i style="left:1141.9px;top:1394.5px;width:21.5px;height:21.1px;background:rgb(204,205,207)"></i><i style="left:1163.0px;top:1394.5px;width:3.8px;height:21.1px;background:rgb(222,223,224)"></i>
<div class="b" style="left:1832px;top:1033px;width:245.5px;height:143.5px;background:#fff;border-radius:3px;box-shadow:0 10px 18px 2px rgba(30,40,70,.15),0 5px 7px -2px rgba(30,40,70,.42),0 2px 16px 2px rgba(0,0,0,.08)"></div>
<div class="b" style="left:1863px;top:1066.2px;width:25.2px;height:25.2px;border-radius:3.5px;background:#b4b7bd"></div>
<svg class="ic" style="left:1863px;top:1066.2px;width:25.2px;height:25.2px" viewBox="0 0 24 24"><path d="M5 12.3l4.3 4.3L19.3 6.6" fill="none" stroke="#fff" stroke-width="3.1"/></svg>
<div class="b" style="left:1863px;top:1117.6px;width:25.2px;height:25.2px;border-radius:3.5px;border:2.8px solid #b2b5bd;background:#fff"></div>
<svg class="ic" style="left:0;top:0;width:2560px;height:1458px" viewBox="0 0 2560 1458">
<g transform="translate(1139.4 1126.7) rotate(0)" fill="#ff0000"><path d="M10 -6.0 L124.9 -2.25 A0.95 0.95 0 0 1 124.9 -0.3500000000000001 L10 6.0 Z"/><path d="M6.1 0 L25.2 -11.5 L22.6 -5.6 L22.6 5.6 L25.2 11.5 Z"/><path d="M25.2 -11.5 L6.1 0 L25.2 11.5" fill="none" stroke="#ff0000" stroke-width="6.4" stroke-linecap="round" stroke-linejoin="miter" stroke-miterlimit="10"/></g>
<g transform="translate(1961.2 1079.7) rotate(0)" fill="#ff0000"><path d="M10 -6.0 L106.0 -3.55 A0.95 0.95 0 0 1 106.0 -1.6500000000000001 L10 6.0 Z"/><path d="M6.1 0 L25.2 -11.5 L22.6 -5.6 L22.6 5.6 L25.2 11.5 Z"/><path d="M25.2 -11.5 L6.1 0 L25.2 11.5" fill="none" stroke="#ff0000" stroke-width="6.4" stroke-linecap="round" stroke-linejoin="miter" stroke-miterlimit="10"/></g>
<g transform="translate(2053.4 965.1) rotate(-90)" fill="#ff0000"><path d="M10 -6.0 L86.4 -0.95 A0.95 0.95 0 0 1 86.4 0.95 L10 6.0 Z"/><path d="M6.1 0 L25.2 -11.5 L22.6 -5.6 L22.6 5.6 L25.2 11.5 Z"/><path d="M25.2 -11.5 L6.1 0 L25.2 11.5" fill="none" stroke="#ff0000" stroke-width="6.4" stroke-linecap="round" stroke-linejoin="miter" stroke-miterlimit="10"/></g>
</svg>
<div style="position:absolute;left:0;top:0;width:2560px;height:1458px;will-change:transform">
<span id="logo_g" class="t" style="left:138.73px;top:20px;line-height:41px;font-size:33px;font-weight:400;color:#5f6368;transform:scaleX(0.8687);-webkit-text-stroke:0.5px currentColor;">Google</span>
<span id="logo_sc" class="t" style="left:237.99px;top:20px;line-height:41px;font-size:33px;font-weight:400;color:#5f6368;transform:scaleX(0.8075);-webkit-text-stroke:0.3px currentColor;">Search Console</span>
<span id="srch" class="t" style="left:553.38px;top:25px;line-height:26px;font-size:20px;font-weight:400;color:#6b7075;transform:scaleX(1.0218);">Inspeccionar las URL de</span>
<span id="bc1" class="t" style="left:485.20px;top:104px;line-height:34px;font-size:26px;font-weight:400;color:#444746;transform:translateZ(0);">Indexación de páginas</span>
<span id="bc2" class="t" style="left:797.06px;top:104px;line-height:34px;font-size:26px;font-weight:400;color:#3a3c3b;transform:scaleX(1.0201);-webkit-text-stroke:0.7px currentColor;">Páginas indexadas</span>
<span id="exp" class="t" style="left:2263.30px;top:107px;line-height:24px;font-size:17.5px;font-weight:400;color:#444746;transform:scaleX(0.9966);-webkit-text-stroke:0.6px currentColor;">EXPORTAR</span>
<span id="cmp" class="t" style="left:2431.50px;top:107px;line-height:24px;font-size:17.5px;font-weight:400;color:#ffffff;transform:scaleX(1.0102);-webkit-text-stroke:0.6px currentColor;">COMPARTIR</span>
<span id="av" class="t" style="left:2527.40px;top:23px;line-height:30px;font-size:23px;font-weight:400;color:#ffffff;transform:translateZ(0);">T</span>
<span id="s1" class="t" style="left:71.87px;top:185px;line-height:24px;font-size:17.5px;font-weight:400;color:#444746;transform:scaleX(1.1317);-webkit-text-stroke:0.42px currentColor;">Descripción general</span>
<span id="s2" class="t" style="left:71.87px;top:236px;line-height:24px;font-size:17.5px;font-weight:400;color:#444746;transform:scaleX(1.1261);-webkit-text-stroke:0.42px currentColor;">Estadísticas</span>
<span id="s3" class="t" style="left:71.90px;top:288px;line-height:24px;font-size:17.5px;font-weight:400;color:#444746;transform:scaleX(1.0965);-webkit-text-stroke:0.42px currentColor;">Inspección de URLs</span>
<span id="h1" class="t" style="left:45.80px;top:358px;line-height:24px;font-size:17.5px;font-weight:400;color:#444746;transform:scaleX(1.1034);-webkit-text-stroke:0.42px currentColor;">Rendimiento</span>
<span id="s4" class="t" style="left:71.89px;top:410px;line-height:24px;font-size:17.5px;font-weight:400;color:#444746;transform:scaleX(1.1100);-webkit-text-stroke:0.42px currentColor;">Resultados de búsqueda</span>
<span id="s5" class="t" style="left:71.88px;top:461px;line-height:24px;font-size:17.5px;font-weight:400;color:#444746;transform:scaleX(1.1169);-webkit-text-stroke:0.42px currentColor;">Discover</span>
<span id="s6" class="t" style="left:71.60px;top:513px;line-height:24px;font-size:17.5px;font-weight:400;color:#444746;transform:scaleX(1.0931);-webkit-text-stroke:0.42px currentColor;">Google News</span>
<span id="h2" class="t" style="left:45.68px;top:582px;line-height:24px;font-size:17.5px;font-weight:400;color:#444746;transform:scaleX(1.1217);-webkit-text-stroke:0.42px currentColor;">Indexación</span>
<span id="s7" class="t" style="left:72.43px;top:634px;line-height:24px;font-size:17.5px;font-weight:400;color:#1f1f1f;transform:scaleX(1.0690);-webkit-text-stroke:0.42px currentColor;">Páginas</span>
<span id="s8" class="t" style="left:71.80px;top:685px;line-height:24px;font-size:17.5px;font-weight:400;color:#444746;transform:scaleX(1.0615);-webkit-text-stroke:0.42px currentColor;">Vídeos</span>
<span id="s9" class="t" style="left:71.80px;top:737px;line-height:24px;font-size:17.5px;font-weight:400;color:#444746;transform:scaleX(1.1066);-webkit-text-stroke:0.42px currentColor;">Sitemaps</span>
<span id="s10" class="t" style="left:72.43px;top:788px;line-height:24px;font-size:17.5px;font-weight:400;color:#444746;transform:scaleX(1.0734);-webkit-text-stroke:0.42px currentColor;">Retirada de URLs</span>
<span id="h3" class="t" style="left:45.69px;top:859px;line-height:24px;font-size:17.5px;font-weight:400;color:#444746;transform:scaleX(1.1091);-webkit-text-stroke:0.42px currentColor;">Experiencia</span>
<span id="s11" class="t" style="left:71.80px;top:911px;line-height:24px;font-size:17.5px;font-weight:400;color:#444746;transform:scaleX(1.0901);-webkit-text-stroke:0.42px currentColor;">Core Web Vitals</span>
<span id="s12" class="t" style="left:72.40px;top:962px;line-height:24px;font-size:17.5px;font-weight:400;color:#444746;transform:translateZ(0);-webkit-text-stroke:0.42px currentColor;">HTTPS</span>
<span id="h4" class="t" style="left:45.60px;top:1032px;line-height:24px;font-size:17.5px;font-weight:400;color:#444746;transform:scaleX(1.0963);-webkit-text-stroke:0.42px currentColor;">Compras</span>
<span id="s13" class="t" style="left:71.80px;top:1084px;line-height:24px;font-size:17.5px;font-weight:400;color:#444746;transform:scaleX(1.1122);-webkit-text-stroke:0.42px currentColor;">Oportunidades para co…</span>
<span id="h5" class="t" style="left:45.69px;top:1154px;line-height:24px;font-size:17.5px;font-weight:400;color:#444746;transform:scaleX(1.1075);-webkit-text-stroke:0.42px currentColor;">Mejoras</span>
<span id="s14" class="t" style="left:72.39px;top:1206px;line-height:24px;font-size:17.5px;font-weight:400;color:#444746;transform:scaleX(1.1096);-webkit-text-stroke:0.42px currentColor;">Rutas de exploración</span>
<span id="s15" class="t" style="left:72.38px;top:1258px;line-height:24px;font-size:17.5px;font-weight:400;color:#444746;transform:scaleX(1.1202);-webkit-text-stroke:0.42px currentColor;">Preguntas frecuentes</span>
<span id="s16" class="t" style="left:72.37px;top:1309px;line-height:24px;font-size:17.5px;font-weight:400;color:#444746;transform:scaleX(1.1268);-webkit-text-stroke:0.42px currentColor;">Página de perfil</span>
<span id="s17" class="t" style="left:73.00px;top:1360px;line-height:24px;font-size:17.5px;font-weight:400;color:#444746;transform:scaleX(1.0305);-webkit-text-stroke:0.42px currentColor;">Vídeos</span>
<span id="h6" class="t" style="left:45.60px;top:1430px;line-height:24px;font-size:17.5px;font-weight:400;color:#444746;transform:scaleX(1.1153);-webkit-text-stroke:0.42px currentColor;">Seguridad y Acciones manuales</span>
<span id="c1t" class="t" style="left:1034.50px;top:230px;line-height:35px;font-size:27.5px;font-weight:400;color:#3c4043;transform:translateZ(0);">Páginas indexadas</span>
<span id="c1s" class="t" style="left:1035.52px;top:271px;line-height:24px;font-size:17.5px;font-weight:400;color:#7c7f83;transform:scaleX(1.0803);">Estas páginas pueden aparecer en Google</span>
<span id="c1m" class="t" style="left:1034.89px;top:327px;line-height:22px;font-size:16.5px;font-weight:400;color:#707377;transform:scaleX(1.0056);-webkit-text-stroke:0.5px currentColor;letter-spacing:1.0px;">MÁS INFORMACIÓN</span>
<span id="c2t" class="t" style="left:958.37px;top:463px;line-height:22px;font-size:16.25px;font-weight:400;color:#188038;transform:scaleX(1.0333);">Páginas afectadas</span>
<span id="yl0" class="t" style="left:964.40px;top:598px;line-height:22px;font-size:16.25px;font-weight:400;color:#70747a;transform:scaleX(0.9418);">3,8 mil</span>
<span id="yl1" class="t" style="left:964.40px;top:669px;line-height:22px;font-size:16.25px;font-weight:400;color:#70747a;transform:scaleX(0.9418);">2,5 mil</span>
<span id="yl2" class="t" style="left:963.44px;top:738px;line-height:22px;font-size:16.25px;font-weight:400;color:#70747a;transform:scaleX(0.9621);">1,3 mil</span>
<span id="yl3" class="t" style="left:1000.90px;top:809px;line-height:22px;font-size:16.25px;font-weight:400;color:#70747a;transform:scaleX(0.8889);">0</span>
<span id="xl0" class="t" style="left:1009.81px;top:835px;line-height:22px;font-size:16.25px;font-weight:400;color:#70747a;transform:scaleX(1.0399);">19/9/25</span>
<span id="xl1" class="t" style="left:1146.87px;top:835px;line-height:22px;font-size:16.25px;font-weight:400;color:#70747a;transform:scaleX(1.0399);">1/10/25</span>
<span id="xl2" class="t" style="left:1279.69px;top:835px;line-height:22px;font-size:16.25px;font-weight:400;color:#70747a;transform:scaleX(1.0254);">13/10/25</span>
<span id="xl3" class="t" style="left:1417.78px;top:835px;line-height:22px;font-size:16.25px;font-weight:400;color:#70747a;transform:scaleX(1.0092);">25/10/25</span>
<span id="xl4" class="t" style="left:1559.74px;top:835px;line-height:22px;font-size:16.25px;font-weight:400;color:#70747a;transform:scaleX(1.0194);">6/11/25</span>
<span id="xl5" class="t" style="left:1691.53px;top:835px;line-height:22px;font-size:16.25px;font-weight:400;color:#70747a;transform:scaleX(1.0244);">18/11/25</span>
<span id="xl6" class="t" style="left:1828.96px;top:835px;line-height:22px;font-size:16.25px;font-weight:400;color:#70747a;transform:scaleX(1.0289);">30/11/25</span>
<span id="xl7" class="t" style="left:1965.67px;top:835px;line-height:22px;font-size:16.25px;font-weight:400;color:#70747a;transform:scaleX(1.0045);">12/12/25</span>
<span id="ej" class="t" style="left:952.63px;top:986px;line-height:35px;font-size:27.5px;font-weight:400;color:#202124;transform:scaleX(0.9343);">Ejemplos</span>
<span id="fl" class="t" style="left:1122.01px;top:1082px;line-height:21px;font-size:15px;font-weight:400;color:#9aa0a6;transform:scaleX(0.9896);">Filtrar por URL</span>
<span id="ct" class="t" style="left:978.60px;top:1116px;line-height:24px;font-size:17.5px;font-weight:700;color:#202124;transform:scaleX(0.9530);">Contiene</span>
<span id="q" class="t" style="left:1122.20px;top:1116px;line-height:24px;font-size:18px;font-weight:400;color:#202124;transform:translateZ(0);">?</span>
<span id="hu" class="t" style="left:957.66px;top:1177px;line-height:21px;font-size:15px;font-weight:400;color:#5f6368;transform:scaleX(0.9419);">URL</span>
<span id="hr" class="t" style="left:1970.45px;top:1177px;line-height:21px;font-size:15px;font-weight:400;color:#202124;transform:scaleX(1.0466);-webkit-text-stroke:0.4px currentColor;">Último rastreo</span>
<span id="pu" class="t" style="left:1913.59px;top:1067px;line-height:24px;font-size:17.5px;font-weight:400;color:#202124;transform:scaleX(0.9073);">URL</span>
<span id="pr" class="t" style="left:1914.26px;top:1118px;line-height:24px;font-size:17.5px;font-weight:400;color:#202124;transform:scaleX(1.0394);">Último rastreo</span>
<span id="r1u" class="t" style="left:1192.00px;top:1243px;line-height:22px;font-size:16.25px;font-weight:400;color:#202124;transform:scaleX(0.9894);">?page=2</span>
<span id="r1d" class="t" style="left:1981.47px;top:1243px;line-height:22px;font-size:16.25px;font-weight:400;color:#202124;transform:scaleX(1.0278);">14 dic 2025</span>
<span id="r2u" class="t" style="left:1473.40px;top:1305px;line-height:22px;font-size:16.25px;font-weight:400;color:#202124;transform:scaleX(1.0052);">?banner=popup_platform_webinar_258271_en_nov2</span>
<span id="r2b" class="t" style="left:958.60px;top:1331px;line-height:22px;font-size:16.25px;font-weight:400;color:#202124;transform:scaleX(1.0194);">025</span>
<span id="r2d" class="t" style="left:1981.47px;top:1305px;line-height:22px;font-size:16.25px;font-weight:400;color:#202124;transform:scaleX(1.0278);">14 dic 2025</span>
<span id="r3u" class="t" style="left:1167.70px;top:1393px;line-height:22px;font-size:16.25px;font-weight:400;color:#202124;transform:scaleX(0.9862);">?page=2</span>
<span id="r3d" class="t" style="left:1981.47px;top:1393px;line-height:22px;font-size:16.25px;font-weight:400;color:#202124;transform:scaleX(1.0278);">12 dic 2025</span>
</div>
</body></html>
